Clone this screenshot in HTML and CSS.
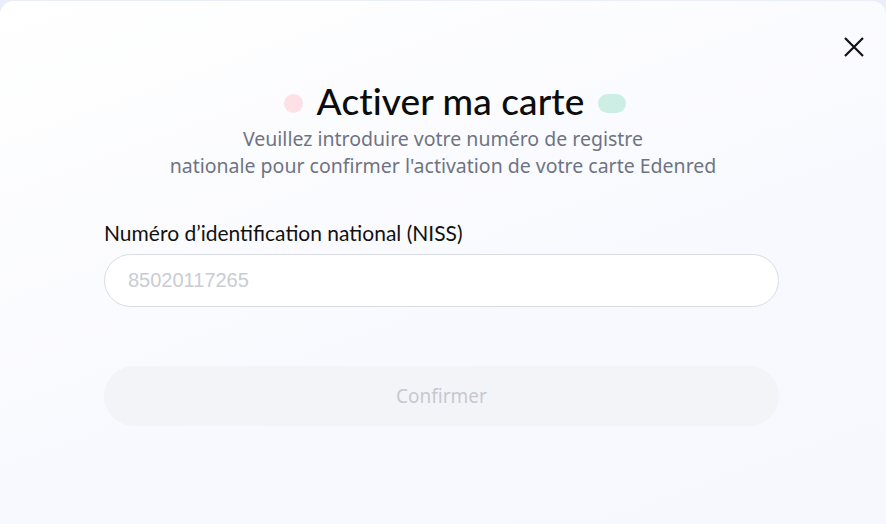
FILE: index.html
```html
<!DOCTYPE html>
<html lang="fr">
<head>
    <meta charset="UTF-8">
    <meta name="viewport" content="width=device-width, initial-scale=1.0">
    <title>Activer ma carte</title>
    <link rel="stylesheet" href="styles.css">
</head>
<body>
    <div class="modal">
        <button class="close" aria-label="Fermer">
            <svg width="22" height="22" viewBox="0 0 22 22">
                <path d="M2 2 L20 20 M20 2 L2 20" stroke="#111" stroke-width="2.2" fill="none"/>
            </svg>
        </button>

        <div class="header">
            <h1 class="title">
                <span class="dot dot-pink"></span>
                Activer ma carte
                <span class="dot dot-mint"></span>
            </h1>
            <p class="subtitle">Veuillez introduire votre numéro de registre<br>nationale pour confirmer l'activation de votre carte Edenred</p>
        </div>

        <form class="form">
            <label class="label" for="niss">Numéro d’identification national (NISS)</label>
            <input class="input" id="niss" type="text" placeholder="85020117265">
            <button class="submit" type="button" disabled>Confirmer</button>
        </form>
    </div>
</body>
</html>
```

FILE: styles.css
```css
html, body {
    margin: 0;
    padding: 0;
    height: 100%;
}

body {
    background: #eaeef9;
    padding-top: 1px;
    box-sizing: border-box;
    font-family: "Noto Sans", Arial, sans-serif;
}

.modal {
    position: relative;
    height: 100%;
    background: linear-gradient(160deg, #ffffff 0%, #f8f9fe 60%, #f6f8fd 100%);
    border-radius: 14px 14px 0 0;
    padding: 0 107px;
    box-sizing: border-box;
}

.close {
    position: absolute;
    top: 35px;
    right: 21px;
    background: none;
    border: 0;
    padding: 0;
    cursor: pointer;
}

.header {
    text-align: center;
    padding-top: 76px;
}

.title {
    margin: 0;
    padding-left: 24px;
    display: flex;
    justify-content: center;
    align-items: center;
    gap: 14px;
    font-family: "Lato", sans-serif;
    font-weight: 500;
    font-size: 37px;
    line-height: 48px;
    color: #0c0c0c;
    letter-spacing: 0.1px;
}

.dot {
    display: inline-block;
    height: 19px;
    border-radius: 10px;
    margin-top: 5px;
}

.dot-pink {
    width: 19px;
    background: #fde1e6;
}

.dot-mint {
    width: 28px;
    background: #cdeee4;
}

.subtitle {
    margin: 0;
    font-size: 19.5px;
    line-height: 27px;
    color: #6e7384;
}

.form {
    margin-top: 41px;
    display: flex;
    flex-direction: column;
}

.label {
    font-family: "Lato", sans-serif;
    font-size: 21px;
    line-height: 26px;
    color: #111;
    margin-left: -3px;
}

.input {
    margin-top: 8px;
    margin-left: -3px;
    height: 53px;
    box-sizing: border-box;
    border: 1px solid #d9dce3;
    border-radius: 27px;
    background: #fff;
    padding: 0 23px;
    font-family: "Liberation Sans", Arial, sans-serif;
    font-size: 20px;
    outline: none;
}

.input::placeholder {
    color: #c9ccd4;
}

.submit {
    margin-top: 59px;
    margin-left: -3px;
    height: 60px;
    border: 0;
    border-radius: 30px;
    background: #f3f4f8;
    color: #c5c8d1;
    font-family: "Noto Sans", Arial, sans-serif;
    font-size: 19px;
}
```
